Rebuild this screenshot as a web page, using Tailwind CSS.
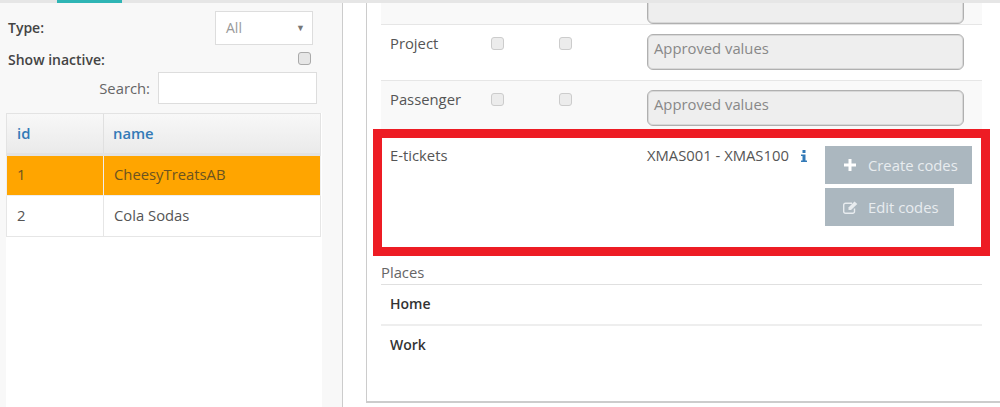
<!DOCTYPE html>
<html lang="en">
<head>
  <meta charset="UTF-8" />
  <meta name="viewport" content="width=device-width, initial-scale=1.0" />
  <title>E-tickets</title>
  <script src="https://cdn.jsdelivr.net/npm/@tailwindcss/browser@4"></script>
</head>
<body class="bg-white h-[407px] overflow-hidden font-['Open_Sans',sans-serif] text-[14.8px] leading-[20px] text-[#555]">

  <!-- Top tabs strip -->
  <div class="h-[3px] bg-[#e6e6e6] pl-[57px]">
    <div class="h-[3px] w-[65px] bg-[#2fb5b5]"></div>
  </div>

  <div class="relative flex h-[404px]">

    <!-- Sidebar -->
    <aside class="w-[343px] shrink-0 bg-[#f8f8f8] border-r border-[#ccc] flex flex-col">
      <div class="flex items-center justify-between h-[34px] mt-[8px] pl-[8px] pr-[29px]">
        <span class="font-semibold text-[14px] text-[#444]">Type:</span>
        <div class="w-[98px] h-[34px] bg-white border border-[#ddd] flex items-center justify-between pl-[10px] pr-[7px] text-[14px] text-[#999]">
          <span>All</span>
          <span class="text-[9px] text-[#777]">▼</span>
        </div>
      </div>
      <div class="flex items-center justify-between h-[20px] mt-[5px] pl-[8px] pr-[31px]">
        <span class="font-semibold text-[14px] text-[#444]">Show inactive:</span>
        <div class="w-[13px] h-[13px] rounded-[3px] border border-[#aaa] bg-[#e6e6e6] -mt-[3px]"></div>
      </div>
      <div class="flex items-center justify-end h-[32px] mt-[2px] pr-[25px] gap-[8px]">
        <span class="text-[#666]">Search:</span>
        <div class="w-[159px] h-[32px] bg-white border border-[#ddd]"></div>
      </div>

      <div class="flex-1 mt-[9px] ml-[6px] w-[316px] bg-white">
        <div class="flex h-[43px] bg-gradient-to-b from-[#f8f8f8] to-[#eaeaea] border border-[#e3e3e3] border-b-[3px] w-[315px] font-semibold text-[#337ab7]">
          <div class="w-[97px] pl-[10px] pb-[2px] flex items-center border-r border-[#e0e0e0]">id</div>
          <div class="flex-1 pl-[9px] pb-[2px] flex items-center">name</div>
        </div>
        <div class="flex h-[40px] w-[315px] bg-[#ffa500] border-x border-b border-[#eee] text-[#6b5320]">
          <div class="w-[97px] pl-[10px] pb-[3px] flex items-center border-r border-[#eee]">1</div>
          <div class="flex-1 pl-[10px] pb-[3px] flex items-center">CheesyTreatsAB</div>
        </div>
        <div class="flex h-[41px] w-[315px] bg-white border-x border-b border-[#e6e6e6]">
          <div class="w-[97px] pl-[10px] pb-[2px] flex items-center border-r border-[#e6e6e6]">2</div>
          <div class="flex-1 pl-[10px] pb-[2px] flex items-center">Cola Sodas</div>
        </div>
      </div>
    </aside>

    <!-- Main panel -->
    <main class="ml-[23px] flex-1 h-[400px] border-l border-b-2 border-[#ccc] pl-[14px] pr-[18px] bg-white">

      <!-- Field rows -->
      <div class="h-[22px] bg-[#f9f9f9] border-b border-[#e6e6e6] overflow-hidden pl-[266px]">
        <div class="w-[317px] h-[36px] -mt-[15px] rounded-[6px] border border-[#b0b0b0] shadow-[inset_0_0_0_1px_#d8d8d8] bg-[#eee]"></div>
      </div>

      <div class="h-[56px] border-b border-[#e6e6e6] flex pt-[9px] pl-[9px]">
        <span class="w-[101px] -mt-[1px]">Project</span>
        <div class="w-[13px] h-[13px] mt-[3px] rounded-[3px] border border-[#ccc] bg-[#ececec]"></div>
        <div class="w-[13px] h-[13px] mt-[3px] ml-[55px] rounded-[3px] border border-[#ccc] bg-[#ececec]"></div>
        <div class="w-[317px] h-[36px] ml-[75px] rounded-[6px] border border-[#b0b0b0] shadow-[inset_0_0_0_1px_#d8d8d8] bg-[#eee] pl-[6px] pt-[3px] text-[#888]">Approved values</div>
      </div>

      <div class="h-[56px] bg-[#f9f9f9] flex pt-[9px] pl-[9px]">
        <span class="w-[101px] -mt-[1px]">Passenger</span>
        <div class="w-[13px] h-[13px] mt-[3px] rounded-[3px] border border-[#ccc] bg-[#ececec]"></div>
        <div class="w-[13px] h-[13px] mt-[3px] ml-[55px] rounded-[3px] border border-[#ccc] bg-[#ececec]"></div>
        <div class="w-[317px] h-[36px] ml-[75px] rounded-[6px] border border-[#b0b0b0] shadow-[inset_0_0_0_1px_#d8d8d8] bg-[#eee] pl-[6px] pt-[3px] text-[#888]">Approved values</div>
      </div>

      <div class="h-[126px] flex pt-[9px] pl-[9px]">
        <span class="w-[257px] -mt-[1px]">E-tickets</span>
        <span class="w-[154px] -mt-[1px]">XMAS001 - XMAS100</span>
        <svg class="w-[6px] h-[12px] mt-[4px] text-[#337ab7]" viewBox="0 0 6 12" fill="currentColor"><rect x="1.5" y="0" width="3" height="3"/><path d="M0 4.5h4.5V10.5H6V12H0V10.5H1.5V6H0z"/></svg>
        <div class="flex flex-col items-start gap-[4px] ml-[18px]">
          <div class="w-[147px] h-[38px] bg-[#abb7bf] text-[#e8ecef] flex items-center pl-[19px] gap-[12px]">
            <svg class="w-[12px] h-[12px]" viewBox="0 0 12 12" fill="#fff"><path d="M4.5 0h3v4.5H12v3H7.500V12h-3V7.500H0v-3h4.500z"/></svg>
            <span class="-mt-[1px]">Create codes</span>
          </div>
          <div class="w-[129px] h-[38px] bg-[#abb7bf] text-[#e8ecef] flex items-center pl-[18px] gap-[10px]">
            <svg class="w-[15px] h-[13px]" viewBox="0 0 15 13" fill="none" stroke="#e8ecef" stroke-width="1.400"><path d="M11.500 7.500V10.500a1.800 1.800 0 0 1-1.800 1.800H2.500A1.800 1.800 0 0 1 .7 10.500V4a1.800 1.800 0 0 1 1.800-1.800H9"/><path d="M5.500 9V6.500L11.500.5l2.800 2.600-6.300 5.900z" fill="#e8ecef" stroke="none"/></svg>
            <span class="-mt-[1px]">Edit codes</span>
          </div>
        </div>
      </div>

      <!-- Places -->
      <div class="h-[22px] border-b border-[#e0e0e0] text-[#666] leading-[18px]">Places</div>
      <div class="h-[41px] border-b-2 border-[#eee] flex items-center pl-[9px] pb-[1px] font-semibold text-[14px] text-[#333]">Home</div>
      <div class="h-[37px] flex items-center pl-[9px] font-semibold text-[14px] text-[#333]">Work</div>
    </main>

    <!-- Red annotation frame drawn over the screenshot -->
    <div class="absolute left-[373px] top-[126px] w-[617px] h-[127px] border-[9px] border-[#ed1c24] pointer-events-none"></div>
  </div>

</body>
</html>
